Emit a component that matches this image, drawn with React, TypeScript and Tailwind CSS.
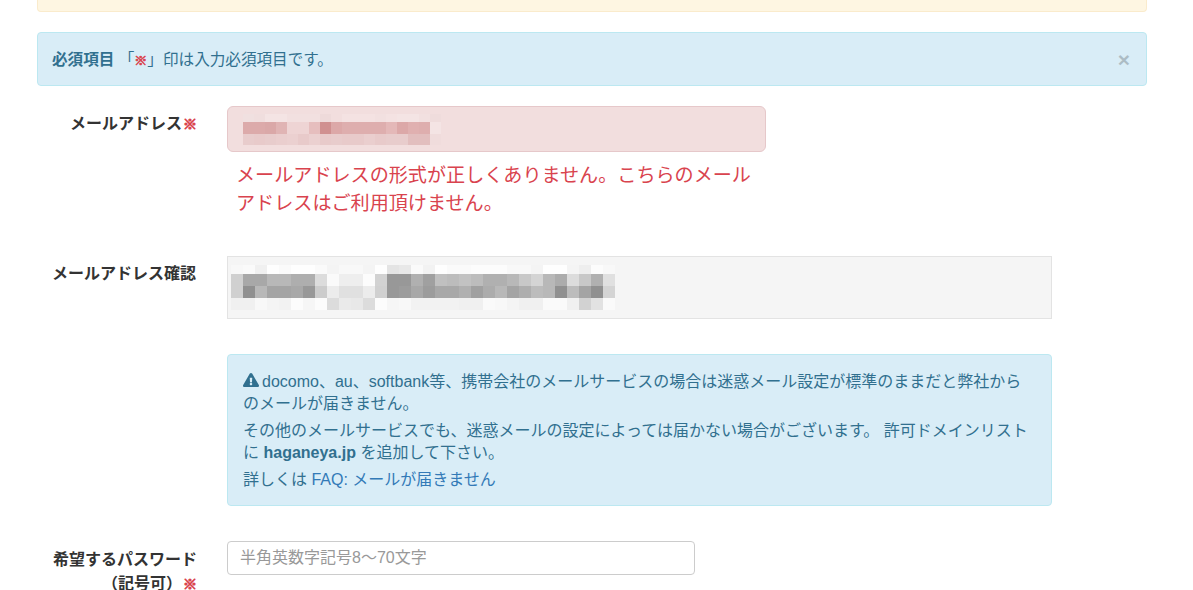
import React from 'react'
import { FaExclamationTriangle } from 'react-icons/fa'

const font = { fontFamily: '"Liberation Sans", "Noto Sans CJK JP", sans-serif' }

const emailMosaic = [
  ['f0e0e0', 'f0dede', 'f4e4e4', 'f4e4e4', 'f2e0e0', 'f2e0e0', 'f2e0e0', 'eedada', 'f2dede', 'f4e2e2', 'f4e2e2', 'f4e2e2', 'f2e0e0', 'f4e2e2', 'f4e4e4', 'f4e4e4', 'f2e0e0', 'efdcdc'],
  ['dcaaaa', 'dcaaaa', 'daa8a8', 'e0b4b4', 'eed4d4', 'eed4d4', 'e6bebe', 'd09090', 'dca8a8', 'deaeae', 'deaeae', 'deaeae', 'deaeae', 'e4b8b8', 'dca8a8', 'e0b0b0', 'deaeae', 'f4e4e4'],
  ['e8cccc', 'e8caca', 'e8cccc', 'eacece', 'ebd0d0', 'e8caca', 'ebd0d0', 'e8caca', 'e8cccc', 'e8caca', 'e8caca', 'eacece', 'e8caca', 'e8cccc', 'e8cccc', 'e2bebe', 'e2bebe', 'f0dcdc'],
]

const confirmMosaic = [
  ['f8', 'fa', 'f0', 'fe', 'fa', 'fe', 'fe', 'fa', 'f4', 'f8', 'f8', 'f4', 'fe', 'e4', 'e8', 'fa', 'f2', 'fe', 'fa', 'fa', 'fc', 'fc', 'fc', 'f8', 'f8', 'f4', 'fe', 'fe', 'f4', 'ee', 'fc', 'f8'],
  ['d0', 'a8', 'a8', 'b8', 'b8', 'ae', 'ae', 'dc', 'fa', 'ee', 'ee', 'fc', 'd2', '98', '98', 'b0', 'a0', 'c0', 'bc', 'c2', 'bc', 'b0', 'b0', 'b8', 'c8', 'd4', 'b8', 'ac', 'dc', 'c8', 'b0', 'e0'],
  ['d0', '90', 'b8', 'a4', 'a4', 'a8', '98', 'cc', 'ec', 'e0', 'e0', 'ec', 'd0', '98', '9c', 'a8', '9c', 'a8', 'a8', 'b0', 'a0', 'ac', 'b8', 'a4', 'ae', 'bc', 'b8', '90', 'bc', 'a4', '90', 'd4'],
  ['f0', 'f0', 'f8', 'f4', 'f2', 'fc', 'f6', 'fc', 'dc', 'ea', 'e8', 'dc', 'fc', 'f6', 'f8', 'f2', 'f2', 'f2', 'f2', 'f0', 'f0', 'fa', 'f8', 'f4', 'f0', 'f0', 'fa', 'fa', 'f0', 'd2', 'e2', 'fa'],
]

function Mosaic({ rows, cell, heights, color }: { rows: string[][]; cell: number; heights: number[]; color: (c: string) => string }) {
  let y = 0
  const total = heights.reduce((a, b) => a + b, 0)
  return (
    <svg width={rows[0].length * cell} height={total} shapeRendering="crispEdges" className="block">
      {rows.map((row, r) => {
        const top = y
        y += heights[r]
        return row.map((c, i) => (
          <rect key={r + '-' + i} x={i * cell} y={top} width={cell} height={heights[r]} fill={color(c)} />
        ))
      })}
    </svg>
  )
}

function Req({ small }: { small?: boolean }) {
  return (
    <span
      className={
        "font-['Noto_Sans_CJK_JP'] font-black leading-none text-[#d9434e] " +
        (small ? '[-webkit-text-stroke:0.7px_#d9434e] text-[13px]' : 'ml-[1px] [-webkit-text-stroke:1px_#d9434e] text-[14px]')
      }
    >
      ※
    </span>
  )
}

function Row({ label, children, className, labelClass }: { label: React.ReactNode; children: React.ReactNode; className?: string; labelClass?: string }) {
  return (
    <div className={'flex ' + (className ?? '')}>
      <div className={'w-[160px] shrink-0 text-right text-[16px] font-bold leading-[24px] text-[#333] ' + (labelClass ?? '')}>{label}</div>
      <div className="ml-[30px] min-w-0 flex-1">{children}</div>
    </div>
  )
}

export default function App() {
  return (
    <div className="h-[590px] overflow-hidden bg-white pl-[37px] pr-[46px] text-[#333]" style={font}>
      <div className="h-3 rounded-b border border-t-0 border-[#faebcc] bg-[#fef6e2]" />

      <div className="mt-5 flex h-[54px] items-center justify-between rounded border border-[#bce8f1] bg-[#d9edf7] pl-[14px] pr-4 text-[15.6px] text-[#31708f]">
        <div className="pt-[1px]">
          <b>必須項目</b> 「<Req small />」印は入力必須項目です。
        </div>
        <span className="text-[21px] font-bold leading-none text-black opacity-20">×</span>
      </div>

      <Row label={<>メールアドレス<Req /></>} className="mt-5" labelClass="pt-[6px]">
        <div className="flex h-[46px] w-[539px] items-center rounded-md border border-[#e6c8ca] bg-[#f2dede] pl-[15px]">
          <Mosaic rows={emailMosaic} cell={11} heights={[8, 12, 11]} color={(c) => '#' + c} />
        </div>
        <p className="mt-[10px] w-[525px] pl-[9px] text-[19.1px] leading-[28px] text-[#d9434e]">
          メールアドレスの形式が正しくありません。こちらのメールアドレスはご利用頂けません。
        </p>
      </Row>

      <Row label="メールアドレス確認" className="mt-[38px]" labelClass="pt-[6px] pr-[1px]">
        <div className="flex h-[63px] w-[825px] items-center border border-[#e3e3e3] bg-[#f5f5f5] pl-[3px]">
          <Mosaic rows={confirmMosaic} cell={12} heights={[9, 12, 12, 12]} color={(c) => '#' + c + c + c} />
        </div>
      </Row>

      <Row label="" className="mt-[35px]">
        <div className="h-[152px] w-[825px] rounded border border-[#bce8f1] bg-[#d9edf7] pl-[15px] pr-[20px] pt-[16px] text-[16px] leading-[22px] text-[#31708f]">
          <p>
            <FaExclamationTriangle className="mr-[3px] inline-block align-[-1px] text-[16px]" />
            docomo、au、softbank等、携帯会社のメールサービスの場合は迷惑メール設定が標準のままだと弊社からのメールが届きません。
          </p>
          <p className="mt-[5px]">
            その他のメールサービスでも、迷惑メールの設定によっては届かない場合がございます。 許可ドメインリストに <b>haganeya.jp</b> を追加して下さい。
          </p>
          <p className="mt-[5px]">
            詳しくは <a className="text-[#337ab7]">FAQ: メールが届きません</a>
          </p>
        </div>
      </Row>

      <Row label={<>希望するパスワード<br />（記号可）<Req /></>} className="mt-[35px]" labelClass="pt-[7px] leading-[23px]">
        <input
          placeholder="半角英数字記号8〜70文字"
          className="h-[34px] w-[468px] rounded border border-[#ccc] bg-white px-3 text-[16px] text-[#555] outline-none placeholder:text-[#999]"
        />
      </Row>
    </div>
  )
}
